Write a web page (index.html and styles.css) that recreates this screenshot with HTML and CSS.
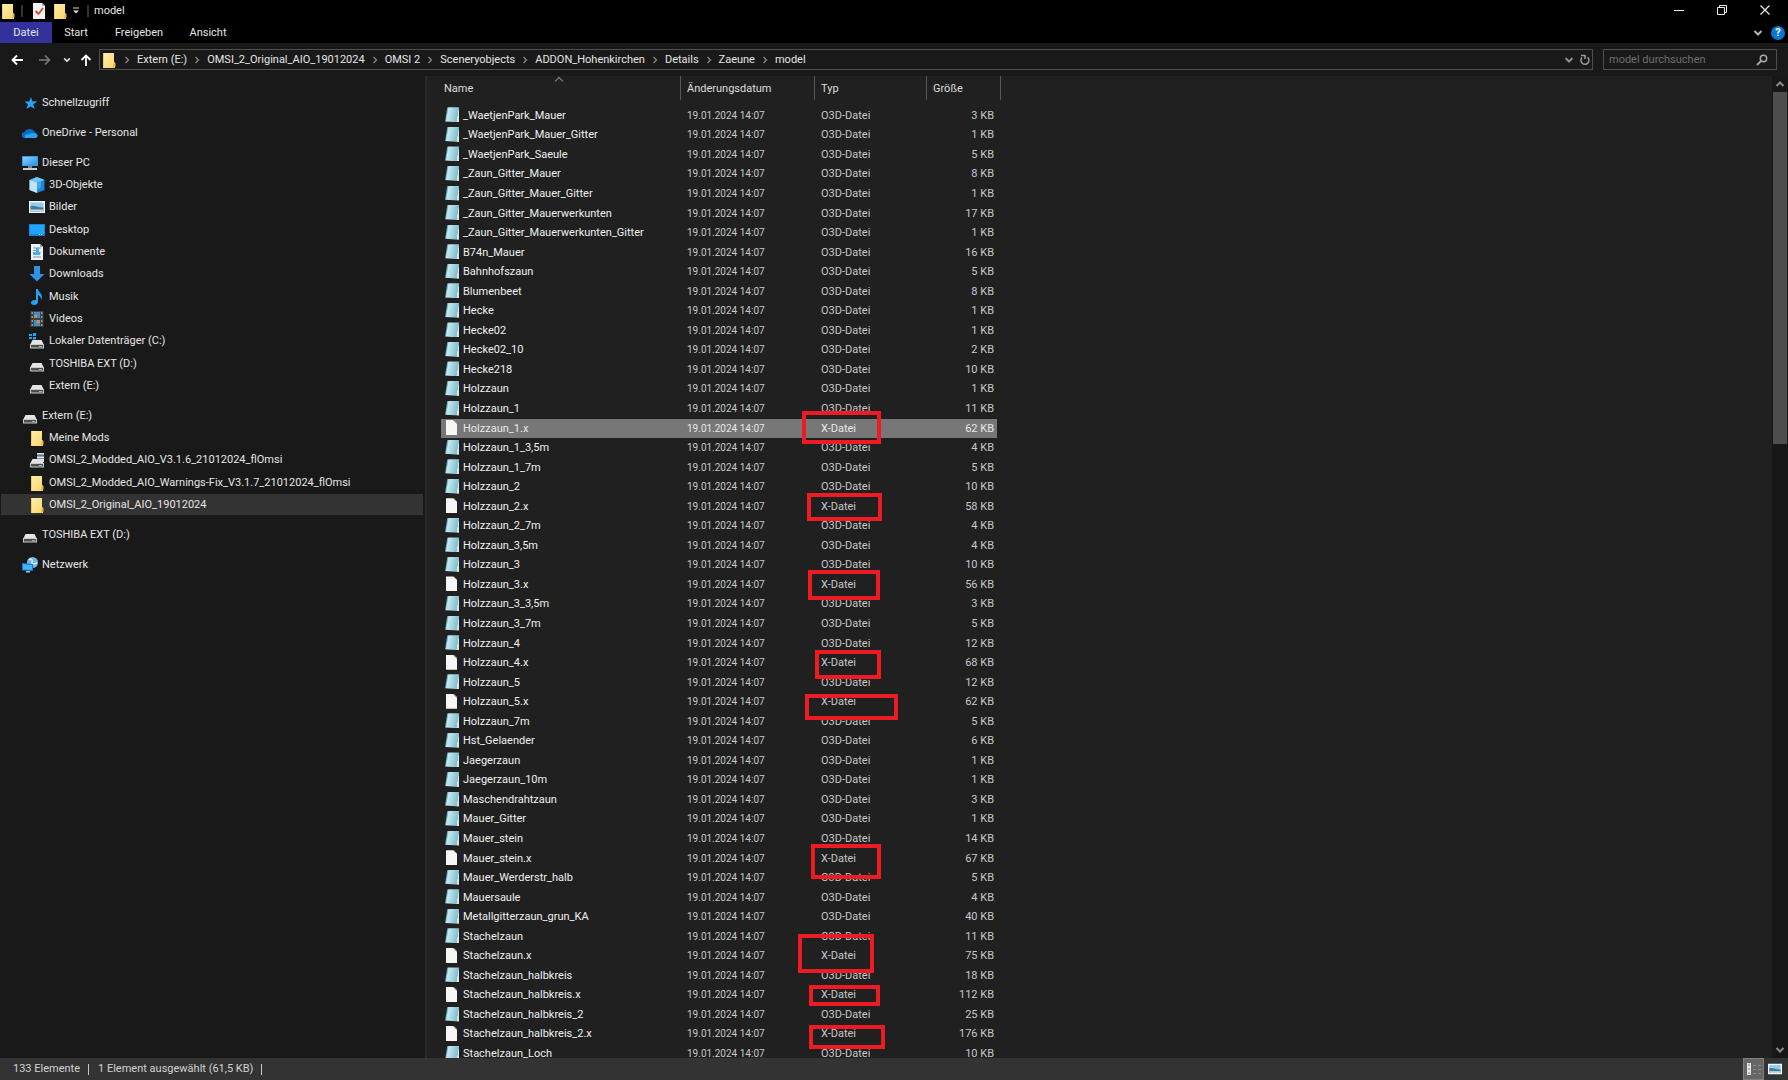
FILE: index.html
```html
<!DOCTYPE html>
<html lang="de">
<head>
<meta charset="utf-8">
<title>model</title>
<link rel="stylesheet" href="styles.css">
</head>
<body>
<svg class="defs" aria-hidden="true">
  <linearGradient id="gold" x1="0" y1="0" x2="1" y2="1"><stop offset="0" stop-color="#fff0ae"/><stop offset="1" stop-color="#f8d467"/></linearGradient>
  <linearGradient id="sky" x1="0" y1="0" x2="1" y2="1"><stop offset="0" stop-color="#8fd0fb"/><stop offset="1" stop-color="#2493ea"/></linearGradient>
  <symbol id="folder" viewBox="0 0 16 16"><path d="M2 1h11v9l1 1v5H2z" fill="url(#gold)"/><path d="M13 10l1.500 1v3.500L12 16z" fill="#e3b64a"/><path d="M2 1h1v15H2z" fill="#f2cd62"/></symbol>
  <symbol id="drive" viewBox="0 0 16 16"><path d="M3.500 7h9l2 4h-13z" fill="#e4e4e4"/><path d="M1 11h14v4.500H1z" fill="#c9c9c9"/><path d="M2 12h12v2.500H2z" fill="#4c4f52"/><path d="M10 13h3v1h-3z" fill="#a4b3ad"/></symbol>
  <symbol id="star" viewBox="0 0 16 16"><path d="M9 2l1.300 4.200 5.200.3-4.300 2.700 1.500 4.800-4-2.600-4.300 2.600 1.600-4.600-3.500-3h4.700z" fill="#25a4f5"/></symbol>
  <symbol id="cloud" viewBox="0 0 16 16"><path d="M3 13a3 3 0 0 1-.5-6A5.500 5 0 0 1 12.500 7a3.200 3.200 0 0 1 .5 6z" fill="#0c6cc4"/><path d="M3 13c-1-3 1.500-4.500 4-3.500C10 7 14 8 16 10.500A3 3 0 0 1 13 13z" fill="#27a4ee"/></symbol>
  <symbol id="pc" viewBox="0 0 16 16"><path d="M0 1h16v10H0z" fill="#2f9bea"/><path d="M1 2h14v8H1z" fill="url(#sky)"/><path d="M6 11h4v2H6z" fill="#78828a"/><path d="M1 13h14v2H1z" fill="#c7cdd1"/></symbol>
  <symbol id="cube" viewBox="0 0 16 16"><path d="M8 0l7.500 3v10L8 16 .5 13V3z" fill="#1a86d8"/><path d="M8 0l7.500 3L8 5.500.5 3z" fill="#72c6f4"/><path d="M.5 3L8 5.500V16L.5 13z" fill="#c2e4f2"/><path d="M8 5.500L12 4v6l-4 3z" fill="#42a7ee"/></symbol>
  <symbol id="picture" viewBox="0 0 16 16"><path d="M0 2h16v12H0z" fill="#f4f7f8"/><path d="M1.500 3.500h13v9h-13z" fill="#8ecdf3"/><path d="M1.500 7c4-1 9 2 13 1.500v4h-13z" fill="#4b7a93"/><path d="M1.500 10.500h13v2h-13z" fill="#c3dce6"/></symbol>
  <symbol id="desktop" viewBox="0 0 16 16"><path d="M0 2h16v12H0z" fill="#1683dc"/><path d="M1 3h14v9H1z" fill="#22a5f7"/><path d="M10 12h1v1h-1zM12 12h1v1h-1z" fill="#fff"/></symbol>
  <symbol id="document" viewBox="0 0 16 16"><path d="M2 0h9l3 3v13H2z" fill="#eef2f3"/><path d="M11 0v3h3z" fill="#9ca7ad"/><path d="M4 4h3M8.500 4H12M4 6.500h3M4 9h2M10 9h2M4 13h8" stroke="#7e98a8"/><path d="M7 3.500h3v5H7zM4 8h7v3H4z" fill="#4bb0ea"/></symbol>
  <symbol id="down" viewBox="0 0 16 16"><path d="M5 0h6v8h4.500L8 15.500.5 8H5z" fill="#2d93e2"/></symbol>
  <symbol id="music" viewBox="0 0 16 16"><path d="M7 0h2c0 3 4 4 4 8 0 1-.5 2-1 3 0-3-1-4-3-5v7c0 2-2 3-4 3s-3-1-3-2.500S4 10.500 7 11z" fill="#22a2f2"/></symbol>
  <symbol id="video" viewBox="0 0 16 16"><path d="M1.500 0h13v16h-13z" fill="#3c4247"/><path d="M2.500 1h1.500v2H2.500zm0 4H4v2H2.500zm0 4H4v2H2.500zm0 4H4v2H2.500zM12 1h1.500v2H12zm0 4h1.500v2H12zm0 4h1.500v2H12zm0 4h1.500v2H12z" fill="#8e979d"/><path d="M5 1h6v6H5zM5 9h6v6H5z" fill="#3b8fd6"/><path d="M5 4h3v3H5zM8 9h3v3H8z" fill="#d68a35"/></symbol>
  <symbol id="sysdrive" viewBox="0 0 16 16"><use href="#drive"/><path d="M0 1h3v2H0zM4 0h3v3H4zM0 4h3v2H0zM4 4h3v2.500H4z" fill="#1ca5f4"/></symbol>
  <symbol id="netdrive" viewBox="0 0 16 16"><use href="#drive"/><path d="M8 1h7v9H8z" fill="#dcdfe1"/><path d="M8 2.500h7v2H8z" fill="#4b7897"/><path d="M8 6h7v1H8z" fill="#8b9398"/></symbol>
  <symbol id="network" viewBox="0 0 16 16"><circle cx="10.500" cy="5.500" r="5.500" fill="#73b8e4"/><path d="M7 3c2-2 4 0 3 2s3 2 5 1" fill="none" stroke="#d4edf9" stroke-width="1.500"/><path d="M0 6l11 1v7L0 13.500z" fill="#1278c9"/><path d="M1 7l9 1v5l-9-.5z" fill="#45b3f5"/><path d="M4 14h4v1.500H4z" fill="#b6c4cd"/></symbol>
  <symbol id="check" viewBox="0 0 16 16"><path d="M2 0h9l3 3v13H2z" fill="#f1f1f1"/><path d="M11 0v3h3z" fill="#aaa"/><path d="M4.500 8l3 3 4.500-6" fill="none" stroke="#d4472d" stroke-width="1.800"/></symbol>
  <symbol id="chev" viewBox="0 0 8 8"><path d="M2.500 1l3 3-3 3" fill="none" stroke="#8c8c8c" stroke-width="1.200"/></symbol>
  <symbol id="caret" viewBox="0 0 10 10"><path d="M1.500 3L5 6.500 8.500 3" fill="none" stroke="currentColor" stroke-width="2"/></symbol>
</svg>

<header class="titlebar">
  <svg class="icon"><use href="#folder"/></svg>
  <span class="bar"></span>
  <button class="quick" aria-label="Eigenschaften"><svg class="icon"><use href="#check"/></svg></button>
  <button class="quick" aria-label="Neuer Ordner"><svg class="icon"><use href="#folder"/></svg></button>
  <button class="quick more" aria-label="Symbolleiste anpassen"><svg width="8" height="8" viewBox="0 0 8 8"><path d="M1 1h6" stroke="#ddd"/><path d="M1 3.500h6L4 6.500z" fill="#ddd"/></svg></button>
  <span class="bar"></span>
  <h1>model</h1>
  <div class="window-buttons">
    <button aria-label="Minimieren"><svg width="10" height="10"><path d="M0 5.500h10" stroke="#eee"/></svg></button>
    <button aria-label="Verkleinern"><svg width="10" height="10" fill="none" stroke="#eee"><path d="M.5 2.500h7v7h-7zM2.500 2.500v-2h7v7h-2"/></svg></button>
    <button aria-label="Schließen"><svg width="10" height="10"><path d="M.5.5l9 9M9.500.5l-9 9" stroke="#eee" stroke-width="1.200"/></svg></button>
  </div>
</header>

<nav class="ribbon">
  <button class="tab file">Datei</button>
  <button class="tab">Start</button>
  <button class="tab wide">Freigeben</button>
  <button class="tab medium">Ansicht</button>
  <div class="ribbon-end">
    <button aria-label="Menüband erweitern"><svg width="10" height="10"><use href="#caret"/></svg></button>
    <button class="help" aria-label="Hilfe">?</button>
  </div>
</nav>

<div class="navbar">
  <div class="history">
    <button aria-label="Zurück"><svg width="12" height="12" viewBox="0 0 12 12"><path d="M12 6H1.500M6 1.500L1.500 6 6 10.500" fill="none" stroke="#fff" stroke-width="1.800"/></svg></button>
    <button aria-label="Vorwärts"><svg width="12" height="12" viewBox="0 0 12 12"><path d="M0 6h10.500M6 1.500L10.500 6 6 10.500" fill="none" stroke="#7d7d7d" stroke-width="1.500"/></svg></button>
    <button class="recent" aria-label="Zuletzt besucht"><svg width="8" height="8" viewBox="0 0 10 10"><use href="#caret"/></svg></button>
    <button class="up" aria-label="Nach oben"><svg width="12" height="12" viewBox="0 0 12 12"><path d="M6 12V1.500M1.500 6L6 1.500 10.500 6" fill="none" stroke="#fff" stroke-width="1.800"/></svg></button>
  </div>
  <div class="address">
    <svg class="icon"><use href="#folder"/></svg>
    <svg class="sep"><use href="#chev"/></svg><a href="#">Extern (E:)</a>
    <svg class="sep"><use href="#chev"/></svg><a href="#">OMSI_2_Original_AIO_19012024</a>
    <svg class="sep"><use href="#chev"/></svg><a href="#">OMSI 2</a>
    <svg class="sep"><use href="#chev"/></svg><a href="#">Sceneryobjects</a>
    <svg class="sep"><use href="#chev"/></svg><a href="#">ADDON_Hohenkirchen</a>
    <svg class="sep"><use href="#chev"/></svg><a href="#">Details</a>
    <svg class="sep"><use href="#chev"/></svg><a href="#">Zaeune</a>
    <svg class="sep"><use href="#chev"/></svg><a href="#">model</a>
    <div class="address-end">
      <button aria-label="Vorherige Orte"><svg width="10" height="10"><use href="#caret"/></svg></button>
      <button aria-label="Aktualisieren"><svg width="10" height="12" viewBox="0 0 10 12"><path d="M7.500 3.200A4 4 0 1 1 2 3.500M1 1.500h4.500M5 1v4" fill="none" stroke="#9b9b9b" stroke-width="1.500"/></svg></button>
    </div>
  </div>
  <label class="search">
    <input type="text" placeholder="model durchsuchen" aria-label="model durchsuchen">
    <svg width="12" height="12" viewBox="0 0 12 12"><circle cx="7.500" cy="4.500" r="3.200" fill="none" stroke="#a8a8a8" stroke-width="1.500"/><path d="M5 7L1 11" stroke="#a8a8a8" stroke-width="1.800"/></svg>
  </label>
</div>

<div class="body">
  <aside class="tree">
    <ul><li><a href="#"><svg class="icon"><use href="#star"/></svg>Schnellzugriff</a></li></ul>
    <ul><li><a href="#"><svg class="icon"><use href="#cloud"/></svg>OneDrive - Personal</a></li></ul>
    <ul>
      <li><a href="#"><svg class="icon"><use href="#pc"/></svg>Dieser PC</a></li>
      <li class="sub"><a href="#"><svg class="icon"><use href="#cube"/></svg>3D-Objekte</a></li>
      <li class="sub"><a href="#"><svg class="icon"><use href="#picture"/></svg>Bilder</a></li>
      <li class="sub"><a href="#"><svg class="icon"><use href="#desktop"/></svg>Desktop</a></li>
      <li class="sub"><a href="#"><svg class="icon"><use href="#document"/></svg>Dokumente</a></li>
      <li class="sub"><a href="#"><svg class="icon"><use href="#down"/></svg>Downloads</a></li>
      <li class="sub"><a href="#"><svg class="icon"><use href="#music"/></svg>Musik</a></li>
      <li class="sub"><a href="#"><svg class="icon"><use href="#video"/></svg>Videos</a></li>
      <li class="sub"><a href="#"><svg class="icon"><use href="#sysdrive"/></svg>Lokaler Datenträger (C:)</a></li>
      <li class="sub"><a href="#"><svg class="icon"><use href="#drive"/></svg>TOSHIBA EXT (D:)</a></li>
      <li class="sub"><a href="#"><svg class="icon"><use href="#drive"/></svg>Extern (E:)</a></li>
    </ul>
    <ul>
      <li><a href="#"><svg class="icon"><use href="#drive"/></svg>Extern (E:)</a></li>
      <li class="sub"><a href="#"><svg class="icon"><use href="#folder"/></svg>Meine Mods</a></li>
      <li class="sub"><a href="#"><svg class="icon"><use href="#netdrive"/></svg>OMSI_2_Modded_AIO_V3.1.6_21012024_flOmsi</a></li>
      <li class="sub"><a href="#"><svg class="icon"><use href="#folder"/></svg>OMSI_2_Modded_AIO_Warnings-Fix_V3.1.7_21012024_flOmsi</a></li>
      <li class="sub current"><a href="#"><svg class="icon"><use href="#folder"/></svg>OMSI_2_Original_AIO_19012024</a></li>
    </ul>
    <ul><li><a href="#"><svg class="icon"><use href="#drive"/></svg>TOSHIBA EXT (D:)</a></li></ul>
    <ul><li><a href="#"><svg class="icon"><use href="#network"/></svg>Netzwerk</a></li></ul>
  </aside>

  <main class="list">
    <table class="files">
      <colgroup><col class="c-name"><col class="c-date"><col class="c-type"><col class="c-size"></colgroup>
      <thead><tr><th class="sorted">Name</th><th>Änderungsdatum</th><th>Typ</th><th>Größe</th></tr></thead>
      <tbody>
        <tr class="o3d"><td>_WaetjenPark_Mauer</td><td>19.01.2024 14:07</td><td>O3D-Datei</td><td>3 KB</td></tr>
        <tr class="o3d"><td>_WaetjenPark_Mauer_Gitter</td><td>19.01.2024 14:07</td><td>O3D-Datei</td><td>1 KB</td></tr>
        <tr class="o3d"><td>_WaetjenPark_Saeule</td><td>19.01.2024 14:07</td><td>O3D-Datei</td><td>5 KB</td></tr>
        <tr class="o3d"><td>_Zaun_Gitter_Mauer</td><td>19.01.2024 14:07</td><td>O3D-Datei</td><td>8 KB</td></tr>
        <tr class="o3d"><td>_Zaun_Gitter_Mauer_Gitter</td><td>19.01.2024 14:07</td><td>O3D-Datei</td><td>1 KB</td></tr>
        <tr class="o3d"><td>_Zaun_Gitter_Mauerwerkunten</td><td>19.01.2024 14:07</td><td>O3D-Datei</td><td>17 KB</td></tr>
        <tr class="o3d"><td>_Zaun_Gitter_Mauerwerkunten_Gitter</td><td>19.01.2024 14:07</td><td>O3D-Datei</td><td>1 KB</td></tr>
        <tr class="o3d"><td>B74n_Mauer</td><td>19.01.2024 14:07</td><td>O3D-Datei</td><td>16 KB</td></tr>
        <tr class="o3d"><td>Bahnhofszaun</td><td>19.01.2024 14:07</td><td>O3D-Datei</td><td>5 KB</td></tr>
        <tr class="o3d"><td>Blumenbeet</td><td>19.01.2024 14:07</td><td>O3D-Datei</td><td>8 KB</td></tr>
        <tr class="o3d"><td>Hecke</td><td>19.01.2024 14:07</td><td>O3D-Datei</td><td>1 KB</td></tr>
        <tr class="o3d"><td>Hecke02</td><td>19.01.2024 14:07</td><td>O3D-Datei</td><td>1 KB</td></tr>
        <tr class="o3d"><td>Hecke02_10</td><td>19.01.2024 14:07</td><td>O3D-Datei</td><td>2 KB</td></tr>
        <tr class="o3d"><td>Hecke218</td><td>19.01.2024 14:07</td><td>O3D-Datei</td><td>10 KB</td></tr>
        <tr class="o3d"><td>Holzzaun</td><td>19.01.2024 14:07</td><td>O3D-Datei</td><td>1 KB</td></tr>
        <tr class="o3d"><td>Holzzaun_1</td><td>19.01.2024 14:07</td><td>O3D-Datei</td><td>11 KB</td></tr>
        <tr class="x selected"><td>Holzzaun_1.x</td><td>19.01.2024 14:07</td><td>X-Datei</td><td>62 KB</td></tr>
        <tr class="o3d"><td>Holzzaun_1_3,5m</td><td>19.01.2024 14:07</td><td>O3D-Datei</td><td>4 KB</td></tr>
        <tr class="o3d"><td>Holzzaun_1_7m</td><td>19.01.2024 14:07</td><td>O3D-Datei</td><td>5 KB</td></tr>
        <tr class="o3d"><td>Holzzaun_2</td><td>19.01.2024 14:07</td><td>O3D-Datei</td><td>10 KB</td></tr>
        <tr class="x"><td>Holzzaun_2.x</td><td>19.01.2024 14:07</td><td>X-Datei</td><td>58 KB</td></tr>
        <tr class="o3d"><td>Holzzaun_2_7m</td><td>19.01.2024 14:07</td><td>O3D-Datei</td><td>4 KB</td></tr>
        <tr class="o3d"><td>Holzzaun_3,5m</td><td>19.01.2024 14:07</td><td>O3D-Datei</td><td>4 KB</td></tr>
        <tr class="o3d"><td>Holzzaun_3</td><td>19.01.2024 14:07</td><td>O3D-Datei</td><td>10 KB</td></tr>
        <tr class="x"><td>Holzzaun_3.x</td><td>19.01.2024 14:07</td><td>X-Datei</td><td>56 KB</td></tr>
        <tr class="o3d"><td>Holzzaun_3_3,5m</td><td>19.01.2024 14:07</td><td>O3D-Datei</td><td>3 KB</td></tr>
        <tr class="o3d"><td>Holzzaun_3_7m</td><td>19.01.2024 14:07</td><td>O3D-Datei</td><td>5 KB</td></tr>
        <tr class="o3d"><td>Holzzaun_4</td><td>19.01.2024 14:07</td><td>O3D-Datei</td><td>12 KB</td></tr>
        <tr class="x"><td>Holzzaun_4.x</td><td>19.01.2024 14:07</td><td>X-Datei</td><td>68 KB</td></tr>
        <tr class="o3d"><td>Holzzaun_5</td><td>19.01.2024 14:07</td><td>O3D-Datei</td><td>12 KB</td></tr>
        <tr class="x"><td>Holzzaun_5.x</td><td>19.01.2024 14:07</td><td>X-Datei</td><td>62 KB</td></tr>
        <tr class="o3d"><td>Holzzaun_7m</td><td>19.01.2024 14:07</td><td>O3D-Datei</td><td>5 KB</td></tr>
        <tr class="o3d"><td>Hst_Gelaender</td><td>19.01.2024 14:07</td><td>O3D-Datei</td><td>6 KB</td></tr>
        <tr class="o3d"><td>Jaegerzaun</td><td>19.01.2024 14:07</td><td>O3D-Datei</td><td>1 KB</td></tr>
        <tr class="o3d"><td>Jaegerzaun_10m</td><td>19.01.2024 14:07</td><td>O3D-Datei</td><td>1 KB</td></tr>
        <tr class="o3d"><td>Maschendrahtzaun</td><td>19.01.2024 14:07</td><td>O3D-Datei</td><td>3 KB</td></tr>
        <tr class="o3d"><td>Mauer_Gitter</td><td>19.01.2024 14:07</td><td>O3D-Datei</td><td>1 KB</td></tr>
        <tr class="o3d"><td>Mauer_stein</td><td>19.01.2024 14:07</td><td>O3D-Datei</td><td>14 KB</td></tr>
        <tr class="x"><td>Mauer_stein.x</td><td>19.01.2024 14:07</td><td>X-Datei</td><td>67 KB</td></tr>
        <tr class="o3d"><td>Mauer_Werderstr_halb</td><td>19.01.2024 14:07</td><td>O3D-Datei</td><td>5 KB</td></tr>
        <tr class="o3d"><td>Mauersaule</td><td>19.01.2024 14:07</td><td>O3D-Datei</td><td>4 KB</td></tr>
        <tr class="o3d"><td>Metallgitterzaun_grun_KA</td><td>19.01.2024 14:07</td><td>O3D-Datei</td><td>40 KB</td></tr>
        <tr class="o3d"><td>Stachelzaun</td><td>19.01.2024 14:07</td><td>O3D-Datei</td><td>11 KB</td></tr>
        <tr class="x"><td>Stachelzaun.x</td><td>19.01.2024 14:07</td><td>X-Datei</td><td>75 KB</td></tr>
        <tr class="o3d"><td>Stachelzaun_halbkreis</td><td>19.01.2024 14:07</td><td>O3D-Datei</td><td>18 KB</td></tr>
        <tr class="x"><td>Stachelzaun_halbkreis.x</td><td>19.01.2024 14:07</td><td>X-Datei</td><td>112 KB</td></tr>
        <tr class="o3d"><td>Stachelzaun_halbkreis_2</td><td>19.01.2024 14:07</td><td>O3D-Datei</td><td>25 KB</td></tr>
        <tr class="x"><td>Stachelzaun_halbkreis_2.x</td><td>19.01.2024 14:07</td><td>X-Datei</td><td>176 KB</td></tr>
        <tr class="o3d"><td>Stachelzaun_Loch</td><td>19.01.2024 14:07</td><td>O3D-Datei</td><td>10 KB</td></tr>
      </tbody>
    </table>
    <div class="mark m1"></div>
    <div class="mark m2"></div>
    <div class="mark m3"></div>
    <div class="mark m4"></div>
    <div class="mark m5"></div>
    <div class="mark m6"></div>
    <div class="mark m7"></div>
    <div class="mark m8"></div>
    <div class="mark m9"></div>
  </main>

  <div class="scrollbar">
    <button class="scroll-up" aria-label="Nach oben blättern"><svg width="10" height="10"><use href="#caret"/></svg></button>
    <div class="track"><div class="thumb"></div></div>
    <button aria-label="Nach unten blättern"><svg width="10" height="10"><use href="#caret"/></svg></button>
  </div>
</div>

<footer class="status">
  <span>133 Elemente</span>
  <span>1 Element ausgewählt (61,5 KB)</span>
  <div class="views">
    <button class="on" aria-label="Details"><svg width="16" height="14"><path d="M1 1h4v12H1z" fill="#e6e6e6"/><path d="M2 3h2M2 7h2M2 11h2" stroke="#5f87a5"/><path d="M7 3.500h3M12 3.500h3M7 7.500h3M12 7.500h3M7 11.500h3M12 11.500h3" stroke="#8b8b8b"/></svg></button>
    <button aria-label="Große Symbole"><svg width="14" height="14" viewBox="0 0 16 16"><use href="#picture"/></svg></button>
  </div>
</footer>
</body>
</html>
```
FILE: styles.css
```css
* { box-sizing: border-box; }
body {
  margin: 0;
  height: 100vh;
  display: flex;
  flex-direction: column;
  overflow: hidden;
  background: #191919;
  color: #e6e6e6;
  font: 11px/16px Roboto, "Open Sans", sans-serif;
}
.defs { position: absolute; width: 0; height: 0; }
.icon { width: 16px; height: 16px; flex: none; }
a { color: inherit; text-decoration: none; white-space: nowrap; }
button {
  display: flex;
  align-items: center;
  justify-content: center;
  padding: 0;
  border: 0;
  background: none;
  color: #b4b4b4;
  font: inherit;
}
ul { margin: 0; padding: 0; list-style: none; }

/* Title bar */
.titlebar { display: flex; align-items: center; flex: none; height: 22px; background: #000; }
.bar { width: 2px; height: 12px; margin: 0 5px; background: #333; }
.quick { width: 21px; }
.more { width: 12px; }
h1 { margin: 0; font-size: 11px; font-weight: 400; }
.window-buttons { display: flex; margin-left: auto; margin-right: 2px; align-self: stretch; padding-bottom: 2px; }
.window-buttons button { width: 43px; }

/* Ribbon tabs */
.ribbon { display: flex; flex: none; height: 21px; background: #000; }
.tab { width: 48px; color: #e6e6e6; }
.tab.file { width: 52px; background: #33319b; }
.tab.wide { width: 78px; }
.tab.medium { width: 60px; }
.ribbon-end { display: flex; align-items: center; gap: 8px; margin-left: auto; margin-right: 3px; }
.help { width: 14px; height: 14px; border-radius: 50%; background: #0b78d0; color: #fff; font-weight: 700; line-height: 14px; }

/* Address row */
.navbar { display: flex; align-items: center; flex: none; height: 33px; padding-right: 11px; }
.history { display: flex; align-items: center; width: 99px; padding-left: 10px; }
.history button { width: 14px; height: 20px; }
.history button + button { margin-left: 14px; }
.history button.recent { width: 10px; margin-left: 10px; color: #e6e6e6; }
.history button.up { margin-left: 7px; }
.address {
  flex: 1;
  min-width: 0;
  display: flex;
  align-items: center;
  height: 21px;
  margin-right: 10px;
  padding-left: 1px;
  border: 1px solid #4e4e4e;
}
.sep { flex: none; width: 8px; height: 8px; margin: 0 6px; }
.address-end { display: flex; gap: 6px; margin-left: auto; padding-right: 2px; }
.address-end button { color: #8f8f8f; }
.search {
  display: flex;
  align-items: center;
  width: 174px;
  height: 21px;
  padding: 0 8px 0 5px;
  border: 1px solid #4e4e4e;
}
.search input { flex: 1; min-width: 0; padding: 0; border: 0; outline: 0; background: none; color: #e6e6e6; font: inherit; }
.search input::placeholder { color: #6f6f6f; opacity: 1; }

/* Folder tree */
.body { display: flex; flex: 1; min-height: 0; }
.tree { display: flex; flex-direction: column; gap: 8px; flex: none; width: 425px; padding: 16px 2px 0 1px; }
.tree ul { display: grid; grid-auto-rows: 22px 22px 23px; }
.tree a { display: flex; align-items: center; gap: 4px; height: 21px; padding-left: 21px; }
.tree .sub a { padding-left: 28px; }
.tree .current a { background: #333; }

/* File list */
.list { position: relative; flex: 1; min-width: 0; overflow: hidden; padding-left: 14px; border-left: 2px solid #2a2a2a; background: #202020; }
.files { width: 560px; height: 988px; table-layout: fixed; border-collapse: separate; border-spacing: 0; }
.c-name { width: 240px; }
.c-date { width: 134px; }
.c-type { width: 112px; }
.c-size { width: 74px; }
th {
  position: relative;
  height: 30px;
  padding: 0 0 4px 6px;
  background: linear-gradient(#565656, #565656) right top / 1px 24px no-repeat;
  color: #dedede;
  font-weight: 400;
  text-align: left;
}
th:first-child { padding-left: 3px; }
.sorted::after {
  content: "";
  position: absolute;
  top: 2px;
  left: 115px;
  width: 5px;
  height: 5px;
  border: solid #8a8a8a;
  border-width: 1px 0 0 1px;
  transform: rotate(45deg);
}
td { padding: 0 0 0 6px; color: #c8c8c8; line-height: 16px; white-space: nowrap; }
td:nth-child(1) { padding-left: 4px; color: #f0f0f0; }
td:nth-child(2) { font-size: 10px; }
td:nth-child(4) { padding-right: 3px; border-right: 4px solid transparent; background-clip: padding-box; text-align: right; }
.selected td { background-color: #777; color: #e8e8e8; }

/* File icons: a notepad for O3D files, a blank sheet for X files */
td:first-child::before { content: ""; display: inline-block; vertical-align: middle; margin-top: -2px; }
.o3d td:first-child::before {
  width: 14px;
  height: 15px;
  margin-right: 4px;
  background: linear-gradient(100deg, #5aa0b2 0 16%, #c5e9f2 24%, #7fbfd0 84%, #e9e4d2 86%);
  clip-path: polygon(16% 0, 100% 0, 100% 100%, 0 94%);
}
.x td:first-child::before {
  width: 11px;
  height: 15px;
  margin-left: 1px;
  margin-right: 6px;
  background: linear-gradient(225deg, #aaa 0 3px, #f6f6f6 3px);
  clip-path: polygon(0 0, 72% 0, 100% 20%, 100% 100%, 0 100%);
}

/* Red boxes drawn over the X entries */
.mark { position: absolute; border: 4px solid #ed1c24; }
.m1 { left: 375px; top: 335px; width: 79px; height: 33px; }
.m2 { left: 380px; top: 417px; width: 75px; height: 28px; }
.m3 { left: 381px; top: 494px; width: 72px; height: 30px; }
.m4 { left: 388px; top: 574px; width: 66px; height: 29px; }
.m5 { left: 378px; top: 618px; width: 93px; height: 26px; }
.m6 { left: 384px; top: 768px; width: 70px; height: 35px; }
.m7 { left: 371px; top: 858px; width: 76px; height: 39px; }
.m8 { left: 382px; top: 909px; width: 71px; height: 21px; }
.m9 { left: 382px; top: 949px; width: 76px; height: 24px; }

/* Scroll bar */
.scrollbar { display: flex; flex-direction: column; flex: none; width: 16px; background: #171717; }
.scrollbar button { height: 16px; color: #8a8a8a; }
.scroll-up svg { transform: rotate(180deg); }
.track { flex: 1; padding: 0 1px; }
.thumb { height: 37%; background: #4d4d4d; }

/* Status bar */
.status { display: flex; align-items: center; flex: none; height: 22px; padding-left: 13px; background: #333; color: #d2d2d2; }
.status span { display: flex; align-items: center; }
.status span::after { content: ""; width: 1px; height: 11px; margin: 0 9px 0 8px; background: #c8c8c8; }
.views { display: flex; align-self: stretch; margin-left: auto; margin-right: 3px; }
.views button { width: 21px; }
.views .on { background: #666; border: 1px solid #808080; }
```
